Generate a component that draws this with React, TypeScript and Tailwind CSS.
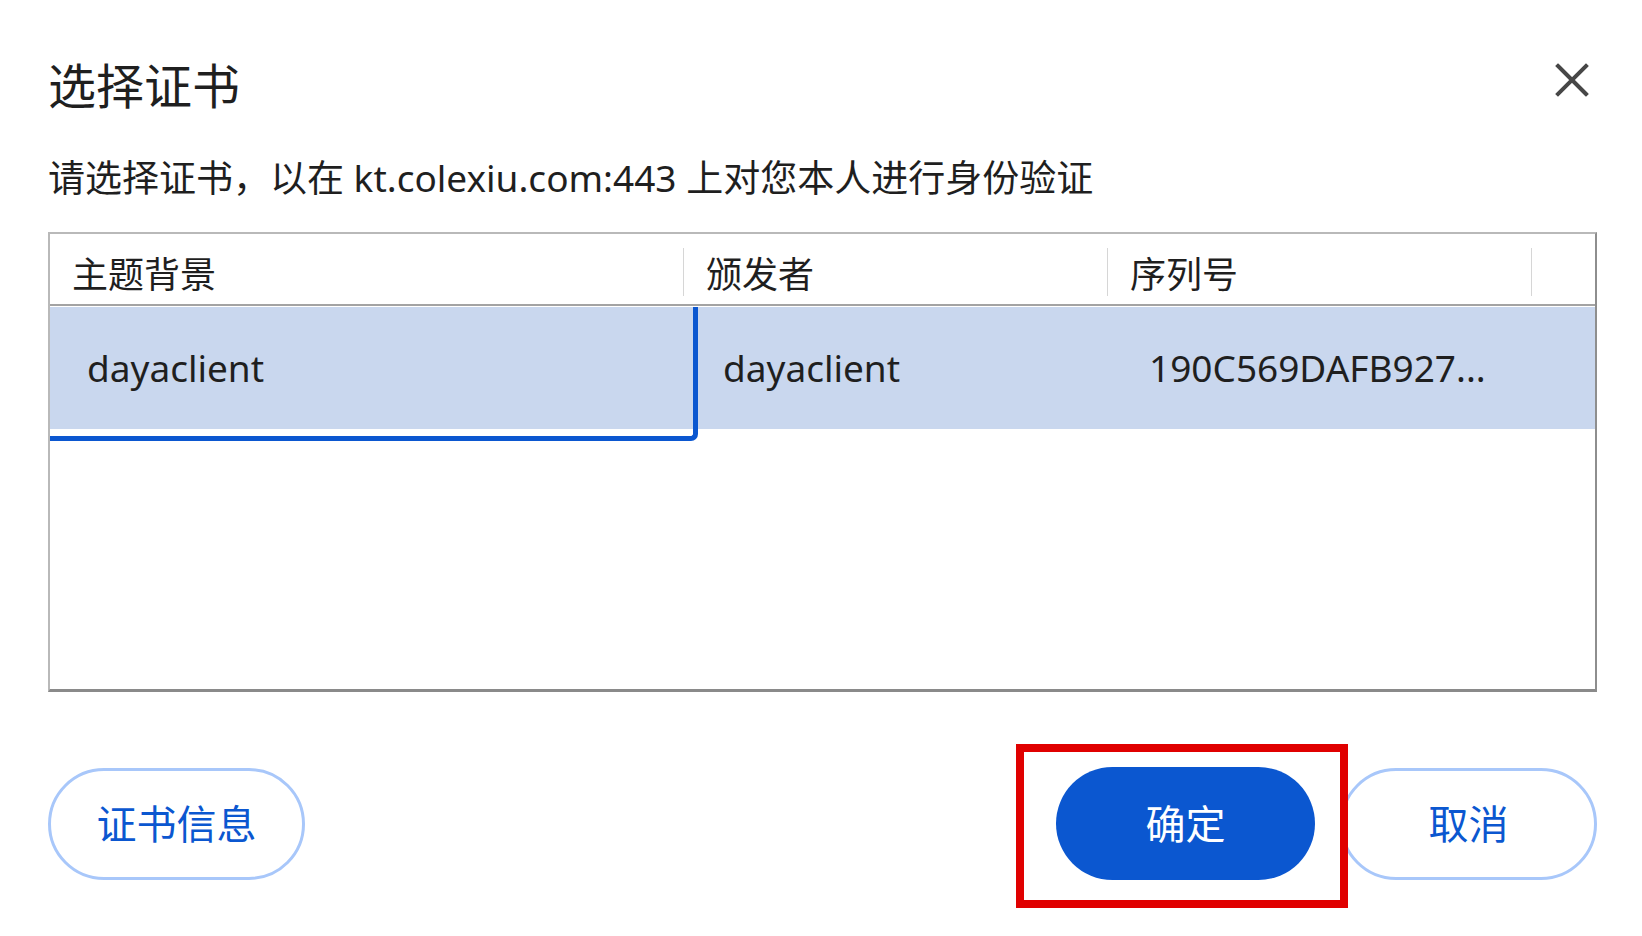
import React from "react";

const font = { fontFamily: '"Noto Sans", "Noto Sans CJK SC", sans-serif' };

function CloseIcon() {
    return (
        <svg width="34" height="34" viewBox="0 0 34 34" className="mt-[3px]">
            <path
                d="M3 3 L31 31 M31 3 L3 31"
                stroke="#474747"
                strokeWidth="4"
                strokeLinecap="square"
            />
        </svg>
    );
}

function HeaderCell({ label, divider = true }: { label?: string; divider?: boolean }) {
    return (
        <div className="flex items-center">
            <span className="flex-1 pl-[22px] pt-[12px] text-[36px] leading-[44px] text-[#1f1f1f]">
                {label}
            </span>
            {divider && <div className="w-px h-[48px] bg-[#d6d6d6] mt-[6px]" />}
        </div>
    );
}

export default function App() {
    return (
        <div className="w-[1642px] h-[936px] bg-white overflow-hidden" style={font}>
            <div className="pl-[48px] pr-[45px] pt-[60px]">
                <div className="flex justify-between items-start">
                    <h1 className="text-[48px] leading-[52px] text-[#1f1f1f] font-normal">
                        选择证书
                    </h1>
                    <div className="mr-[8px]">
                        <CloseIcon />
                    </div>
                </div>

                <p className="mt-[44px] text-[37px] leading-[44px] text-[#1f1f1f]">
                    请选择证书，以在 kt.colexiu.com:443 上对您本人进行身份验证
                </p>

                <div className="mt-[32px] h-[460px] border-t-2 border-l-2 border-[#b9b9b9] border-r-2 border-r-[#8e8e8e] border-b-[3px] border-b-[#8a8a8a]">
                    <div className="grid grid-cols-[634px_424px_424px_1fr] h-[72px] border-b-2 border-[#a3a3a3]">
                        <HeaderCell label="主题背景" />
                        <HeaderCell label="颁发者" />
                        <HeaderCell label="序列号" />
                        <HeaderCell divider={false} />
                    </div>
                    <div className="mt-px grid grid-cols-[634px_424px_424px_1fr] h-[122px] bg-[#c9d7ee] text-[37px] text-[#1f1f1f]">
                        <div className="relative flex items-center pl-[37px]">
                            dayaclient
                            <div className="absolute top-0 left-0 -right-[14px] -bottom-[12px] border-r-[5px] border-b-[5px] border-[#0b57d0] rounded-br-[7px]" />
                        </div>
                        <div className="flex items-center pl-[39px]">dayaclient</div>
                        <div className="flex items-center pl-[41px]">190C569DAFB927...</div>
                        <div />
                    </div>
                </div>

                <div className="mt-[75px] flex items-center">
                    <button className="w-[257px] h-[112px] rounded-full border-[3px] border-[#a8c7fa] text-[40px] text-[#0b57d0]">
                        证书信息
                    </button>
                    <div className="flex-1" />
                    <div className="relative">
                        <button className="w-[259px] h-[113px] rounded-full bg-[#0b57d0] text-[40px] text-white">
                            确定
                        </button>
                        <div className="absolute -left-[40px] -top-[23px] -right-[33px] -bottom-[28px] border-[8px] border-[#e00000]" />
                    </div>
                    <button className="ml-[25px] w-[257px] h-[112px] rounded-full border-[3px] border-[#a8c7fa] text-[40px] text-[#0b57d0]">
                        取消
                    </button>
                </div>
            </div>
        </div>
    );
}
